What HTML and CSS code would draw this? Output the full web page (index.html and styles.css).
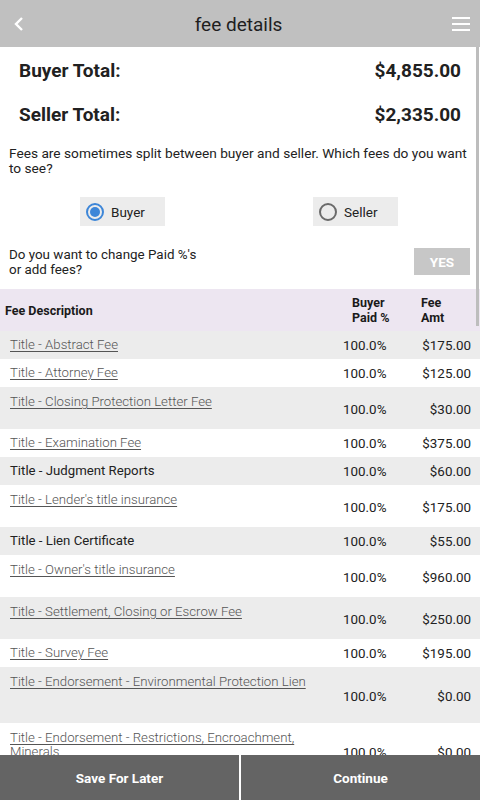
FILE: index.html
```html
<!DOCTYPE html>
<html>
<head>
<meta charset="utf-8">
<link rel="stylesheet" href="styles.css">
</head>
<body>
<div class="app">
  <header class="topbar">
    <svg class="back" width="12" height="16" viewBox="0 0 12 16"><path d="M9 2 L3 8 L9 14" fill="none" stroke="#fff" stroke-width="2.4"/></svg>
    <div class="title">fee details</div>
    <svg class="menu" width="18" height="14" viewBox="0 0 18 14"><rect x="0" y="0" width="18" height="2" fill="#fff"/><rect x="0" y="6" width="18" height="2" fill="#fff"/><rect x="0" y="12" width="18" height="2" fill="#fff"/></svg>
  </header>
  <main class="content">
    <div class="total"><span>Buyer Total:</span><span>$4,855.00</span></div>
    <div class="total"><span>Seller Total:</span><span>$2,335.00</span></div>
    <p class="intro">Fees are sometimes split between buyer and seller. Which fees do you want to see?</p>
    <div class="radios">
      <div class="radio"><span class="dot on"></span>Buyer</div>
      <div class="radio"><span class="dot"></span>Seller</div>
    </div>
    <div class="change">
      <p>Do you want to change Paid %'s<br>or add fees?</p>
      <div class="yes">YES</div>
    </div>
    <div class="thead">
      <div class="c1">Fee Description</div>
      <div class="c2">Buyer<br>Paid %</div>
      <div class="c3">Fee<br>Amt</div>
    </div>
    <div class="row g"><div class="c1"><a>Title - Abstract Fee</a></div><div class="c2">100.0%</div><div class="c3">$175.00</div></div>
    <div class="row"><div class="c1"><a>Title - Attorney Fee</a></div><div class="c2">100.0%</div><div class="c3">$125.00</div></div>
    <div class="row g tall"><div class="c1"><a>Title - Closing Protection Letter Fee</a></div><div class="c2">100.0%</div><div class="c3">$30.00</div></div>
    <div class="row"><div class="c1"><a>Title - Examination Fee</a></div><div class="c2">100.0%</div><div class="c3">$375.00</div></div>
    <div class="row g"><div class="c1 plain">Title - Judgment Reports</div><div class="c2">100.0%</div><div class="c3">$60.00</div></div>
    <div class="row tall"><div class="c1"><a>Title - Lender's title insurance</a></div><div class="c2">100.0%</div><div class="c3">$175.00</div></div>
    <div class="row g"><div class="c1 plain">Title - Lien Certificate</div><div class="c2">100.0%</div><div class="c3">$55.00</div></div>
    <div class="row tall"><div class="c1"><a>Title - Owner's title insurance</a></div><div class="c2">100.0%</div><div class="c3">$960.00</div></div>
    <div class="row g tall"><div class="c1"><a>Title - Settlement, Closing or Escrow Fee</a></div><div class="c2">100.0%</div><div class="c3">$250.00</div></div>
    <div class="row"><div class="c1"><a>Title - Survey Fee</a></div><div class="c2">100.0%</div><div class="c3">$195.00</div></div>
    <div class="row g xtall"><div class="c1"><a>Title - Endorsement - Environmental Protection Lien</a></div><div class="c2">100.0%</div><div class="c3">$0.00</div></div>
    <div class="row xtall"><div class="c1"><a>Title - Endorsement - Restrictions, Encroachment, Minerals</a></div><div class="c2">100.0%</div><div class="c3">$0.00</div></div>
  </main>
  <div class="scrollbar"></div>
  <footer class="footer">
    <div class="btn">Save For Later</div>
    <div class="sep"></div>
    <div class="btn">Continue</div>
  </footer>
</div>
</body>
</html>
```
FILE: styles.css
```css
* { box-sizing: border-box; }
html, body { margin: 0; padding: 0; }
body { font-family: Roboto, "Liberation Sans", sans-serif; color: #212121; background: #fff; }
.app { position: relative; width: 480px; height: 800px; overflow: hidden; display: flex; flex-direction: column; }
.topbar { height: 47px; flex: none; background: #c0c0c0; display: flex; align-items: center; justify-content: space-between; padding: 0 10px 0 13px; }
.title { font-size: 19px; color: #1e1e1e; margin-top: 1px; }
.content { flex: 1; overflow: hidden; }
.total { display: flex; justify-content: space-between; font-weight: bold; font-size: 19px; padding: 0 19px; height: 44px; align-items: center; }
.total:first-child { margin-top: 1px; }
.intro { margin: 10px 0 0 9px; padding-right: 12px; font-size: 13.7px; line-height: 15px; color: #222; }
.radios { display: flex; padding-left: 80px; gap: 148px; margin-top: 21px; }
.radio { width: 85px; height: 29px; background: #ececec; display: flex; align-items: center; padding-left: 6px; font-size: 13.5px; color: #222; }
.dot { width: 18px; height: 18px; border-radius: 50%; border: 2px solid #6a6a6a; margin-right: 7px; position: relative; }
.dot.on { border-color: #3d86d8; }
.dot.on::after { content: ""; position: absolute; left: 2px; top: 2px; width: 10px; height: 10px; border-radius: 50%; background: #3d86d8; }
.change { display: flex; justify-content: space-between; align-items: center; padding: 0 10px 0 9px; margin-top: 21px; height: 30px; }
.change p { margin: 0; font-size: 13.4px; line-height: 15px; color: #222; }
.yes { width: 56px; height: 27px; background: #c7c7c7; color: #fff; font-size: 13.5px; font-weight: bold; display: flex; align-items: center; justify-content: center; margin-top: -1px; }
.thead { display: flex; align-items: center; height: 42px; background: #ede6f1; margin-top: 12px; font-weight: bold; font-size: 12.5px; line-height: 15px; color: #1a1a1a; }
.thead .c1 { padding-left: 5px; }
.thead .c2 { padding-left: 12px; }
.thead .c3 { padding-left: 11px; }
.c1 { flex: 1; padding-left: 10px; }
.c2 { width: 70px; padding-left: 3px; }
.c3 { width: 70px; text-align: right; padding-right: 9px; }
.thead .c3 { text-align: left; }
.row { display: flex; align-items: center; height: 28px; font-size: 13.4px; color: #222; background: #fff; }
.row.g { background: #ececec; }
.row .c1 { font-size: 13.2px; line-height: 14px; }
.row a { color: #555; font-weight: 300; text-decoration: underline; text-underline-offset: 2px; }
.row .c1.plain { color: #222; }
.row.tall { height: 42px; }
.row.tall .c1 { align-self: flex-start; padding-top: 8px; }
.row.xtall { height: 56px; }
.row.xtall .c1 { align-self: flex-start; padding-top: 8px; padding-right: 20px; }
.row.tall .c2, .row.tall .c3 { padding-top: 2px; }
.row.xtall .c2, .row.xtall .c3 { padding-top: 2px; }
.scrollbar { position: absolute; right: 1px; top: 47px; width: 3px; height: 279px; background: #bdbdbd; }
.footer { height: 45px; flex: none; background: #646464; display: flex; align-items: stretch; }
.btn { flex: 1; display: flex; align-items: center; justify-content: center; color: #fff; font-weight: bold; font-size: 13.5px; }
.sep { width: 2px; background: #fff; }
```
